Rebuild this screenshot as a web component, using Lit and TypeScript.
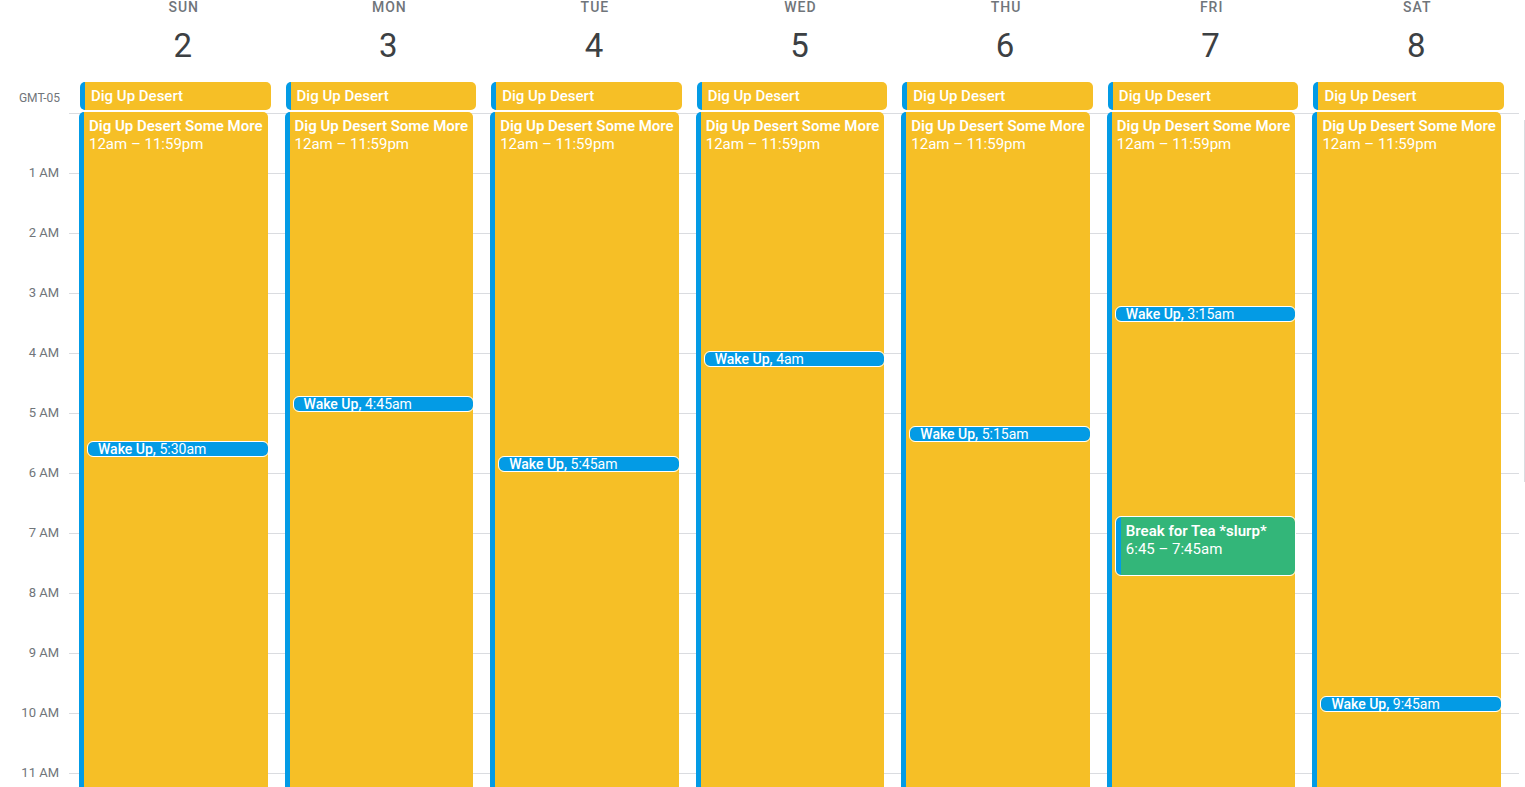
import { LitElement, html, css } from "lit";
import { customElement } from "lit/decorators.js";
import { styleMap } from "lit/directives/style-map.js";

interface Appointment {
  kind: "wall" | "wake" | "tea";
  title: string;
  time: string;
  // Start and length, counted in quarter hours.
  start: number;
  span: number;
}

interface Day {
  name: string;
  date: number;
  events: Appointment[];
}

const wall = (): Appointment => ({
  kind: "wall",
  title: "Dig Up Desert Some More",
  time: "12am – 11:59pm",
  start: 0,
  span: 96,
});

const wake = (time: string, start: number): Appointment => ({
  kind: "wake",
  title: "Wake Up,",
  time,
  start,
  span: 1,
});

const DAYS: Day[] = [
  { name: "SUN", date: 2, events: [wall(), wake("5:30am", 22)] },
  { name: "MON", date: 3, events: [wall(), wake("4:45am", 19)] },
  { name: "TUE", date: 4, events: [wall(), wake("5:45am", 23)] },
  { name: "WED", date: 5, events: [wall(), wake("4am", 16)] },
  { name: "THU", date: 6, events: [wall(), wake("5:15am", 21)] },
  {
    name: "FRI",
    date: 7,
    events: [
      wall(),
      wake("3:15am", 13),
      { kind: "tea", title: "Break for Tea *slurp*", time: "6:45 – 7:45am", start: 27, span: 4 },
    ],
  },
  { name: "SAT", date: 8, events: [wall(), wake("9:45am", 39)] },
];

const HOURS = Array.from({ length: 23 }, (_, i) => {
  const hour = i + 1;
  return `${hour % 12 || 12} ${hour < 12 ? "AM" : "PM"}`;
});

@customElement("app-root")
export class AppRoot extends LitElement {
  static styles = css`
    :host {
      display: flex;
      flex-direction: column;
      height: 100vh;
      overflow: hidden;
      background: #fff;
      color: #70757a;
      font-family: Roboto, "Liberation Sans", sans-serif;
    }
    * {
      box-sizing: border-box;
    }
    .row {
      display: grid;
      grid-template-columns: 80px repeat(7, minmax(0, 1fr)) 6px;
      flex: none;
    }
    .day-head {
      text-align: center;
      height: 82px;
    }
    .day-name {
      margin: 0;
      padding-left: 2px;
      font-size: 14px;
      line-height: 14px;
      font-weight: 500;
      letter-spacing: 1px;
    }
    .day-date {
      margin: 0;
      padding-top: 12px;
      font-size: 33px;
      line-height: 40px;
      font-weight: 400;
      color: #3c4043;
    }
    .zone {
      padding: 8px 20px 0 0;
      text-align: right;
      font-size: 12px;
      line-height: 16px;
    }
    .all-day {
      height: 28px;
      margin: 0 15px 2px 0;
      padding: 0 0 0 6px;
      border: 0 solid #039be5;
      border-left-width: 5px;
      border-radius: 5px;
      background: #f6bf26;
      color: #fff;
      font-family: inherit;
      font-size: 15px;
      line-height: 27px;
      font-weight: 500;
      text-align: left;
      white-space: nowrap;
      overflow: hidden;
    }
    .body {
      flex: 1 0 0;
      min-height: 0;
      overflow-x: hidden;
      overflow-y: auto;
      scrollbar-width: none;
    }
    /* Hour lines start a little left of the first day and stop before the rail. */
    .timeline {
      background: linear-gradient(transparent 1px, #dadce0 1px 2px, transparent 2px)
        69px 0 / calc(100% - 75px) 60px repeat-y;
    }
    .hours {
      display: grid;
      grid-auto-rows: 60px;
      align-content: start;
      padding: 53px 21px 0 0;
    }
    .hour {
      text-align: right;
      font-size: 13px;
      line-height: 16px;
    }
    .day {
      display: grid;
      grid-template-rows: repeat(96, 15px);
      grid-template-columns: minmax(0, 1fr);
      margin: 0 18px 0 -1px;
    }
    .event {
      grid-column: 1;
      border: 0;
      color: #fff;
      font-family: inherit;
      font-weight: 400;
      text-align: left;
      white-space: nowrap;
      overflow: hidden;
    }
    .event strong {
      font-weight: 500;
    }
    .wall,
    .tea {
      display: flex;
      flex-direction: column;
      justify-content: flex-start;
      align-items: flex-start;
      padding: 5px 0 0 5px;
      border-left: 5px solid #039be5;
      border-radius: 5px;
      font-size: 15px;
      line-height: 18px;
    }
    .wall {
      margin: 0;
      background: #f6bf26;
    }
    .wall strong,
    .tea strong {
      font-weight: 600;
    }
    .tea,
    .wake {
      margin: 0 0 1px 9px;
      outline: 1px solid #fff;
    }
    .tea {
      margin-bottom: 2px;
      background: #33b679;
    }
    .wake {
      padding: 0 0 0 10px;
      border-radius: 5px;
      background: #039be5;
      font-size: 14px;
      line-height: 14px;
    }
    .rail {
      justify-self: end;
      width: 1px;
      height: 46vh;
      margin-top: 8px;
      background: #dadce0;
    }
  `;

  private renderEvent(e: Appointment) {
    const place = styleMap({ gridRow: `${e.start + 1} / span ${e.span}` });
    return html`<button type="button" class="event ${e.kind}" style=${place}>
      <strong>${e.title}</strong> <span>${e.time}</span>
    </button>`;
  }

  render() {
    return html`
      <header class="row">
        <span></span>
        ${DAYS.map(
          (d) => html`<div class="day-head">
            <h2 class="day-name">${d.name}</h2>
            <p class="day-date">${d.date}</p>
          </div>`
        )}
      </header>
      <div class="row">
        <div class="zone">GMT-05</div>
        ${DAYS.map(() => html`<button type="button" class="all-day">Dig Up Desert</button>`)}
      </div>
      <main class="body">
        <div class="row timeline">
          <div class="hours">${HOURS.map((h) => html`<div class="hour">${h}</div>`)}</div>
          ${DAYS.map((d) => html`<div class="day">${d.events.map((e) => this.renderEvent(e))}</div>`)}
          <div class="rail"></div>
        </div>
      </main>
    `;
  }
}
